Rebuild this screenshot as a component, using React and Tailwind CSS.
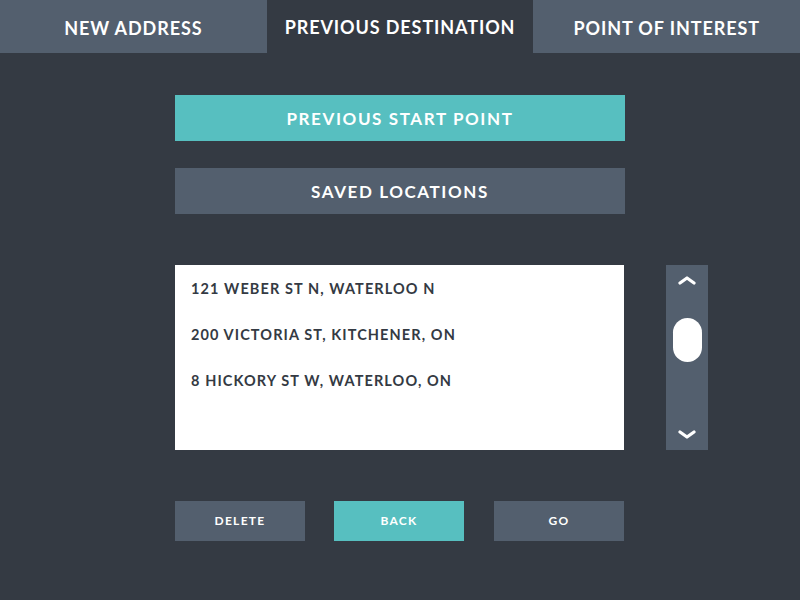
import React from 'react';

const tabs = [
  { label: 'NEW ADDRESS', active: false },
  { label: 'PREVIOUS DESTINATION', active: true },
  { label: 'POINT OF INTEREST', active: false },
];

const places = [
  '121 WEBER ST N, WATERLOO N',
  '200 VICTORIA ST, KITCHENER, ON',
  '8 HICKORY ST W, WATERLOO, ON',
];

const App = () => {
  return (
    <div className="w-[800px] h-[600px] bg-[#343a43] font-['Lato',sans-serif] text-white overflow-hidden">
      {/* Tabs */}
      <div className="flex h-[53px]">
        {tabs.map((t) => (
          <div
            key={t.label}
            className={
              t.active
                ? 'flex-1 flex items-center justify-center bg-[#343a43] text-[18px] font-bold tracking-[0.9px] pt-[1px]'
                : 'flex-1 flex items-center justify-center bg-[#535f6e] text-[18px] font-bold tracking-[0.9px] pt-[3px]'
            }
          >
            {t.label}
          </div>
        ))}
      </div>

      {/* Main column */}
      <div className="flex flex-col items-center pt-[42px]">
        <button className="w-[450px] h-[46px] pt-[2px] bg-[#57bfc0] text-[17px] font-bold tracking-[1.6px]">
          PREVIOUS START POINT
        </button>
        <button className="w-[450px] h-[46px] pt-[2px] mt-[27px] bg-[#535f6e] text-[17px] font-bold tracking-[1.6px]">
          SAVED LOCATIONS
        </button>

        {/* List + scrollbar */}
        <div className="grid grid-cols-[1fr_450px_1fr] w-full mt-[51px]">
          <div />
          <div className="w-[449px] h-[185px] bg-white pl-4 pt-[14px] text-[#343a43] text-[14.5px] font-bold tracking-[1.1px]">
            {places.map((p) => (
              <div key={p} className="h-[46px] leading-[20px]">
                {p}
              </div>
            ))}
          </div>
          <div className="pl-[41px]">
            <div className="w-[42px] h-[185px] bg-[#535f6e] flex flex-col items-center pt-[10px]">
              <svg width="20" height="10" viewBox="0 0 20 10" fill="none" stroke="white" strokeWidth="3.2" strokeLinecap="round" strokeLinejoin="round">
                <path d="M3 8 L10 3 L17 8" />
              </svg>
              <div className="w-[29px] h-[44px] rounded-full bg-white mt-[33px]" />
              <div className="flex-1" />
              <svg width="20" height="10" viewBox="0 0 20 10" fill="none" stroke="white" strokeWidth="3.2" strokeLinecap="round" strokeLinejoin="round" className="mb-[10px]">
                <path d="M3 2 L10 7 L17 2" />
              </svg>
            </div>
          </div>
        </div>

        {/* Bottom buttons */}
        <div className="flex w-[450px] mt-[51px]">
          <button className="w-[130px] h-[40px] bg-[#535f6e] text-[12px] font-bold tracking-[1.3px]">DELETE</button>
          <button className="w-[130px] h-[40px] ml-[29px] bg-[#57bfc0] text-[12px] font-bold tracking-[1.3px]">BACK</button>
          <button className="w-[130px] h-[40px] ml-[30px] bg-[#535f6e] text-[12px] font-bold tracking-[1.3px]">GO</button>
        </div>
      </div>
    </div>
  );
};

export default App;
